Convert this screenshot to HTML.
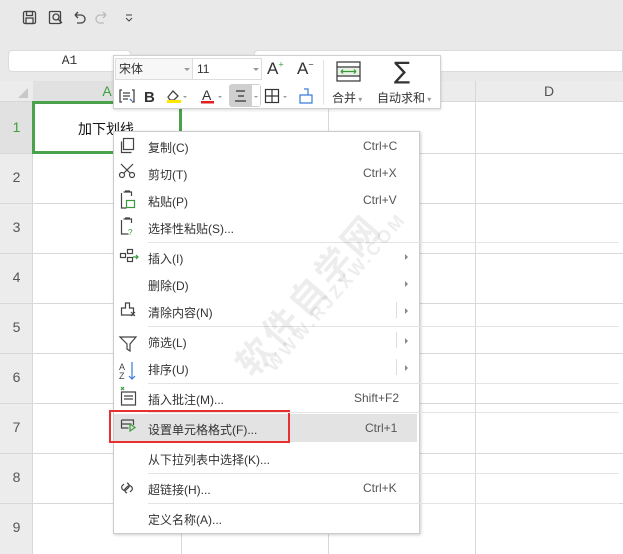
<!DOCTYPE html>
<html><head><meta charset="utf-8"><style>
*{margin:0;padding:0;box-sizing:border-box}
body{width:623px;height:554px;overflow:hidden;background:#fff;font-family:"Liberation Sans","Noto Sans CJK SC",sans-serif;position:relative;font-size:12px;color:#333}
.a{position:absolute}
.vl{position:absolute;top:81px;height:473px;width:1px;background:#d8d8d8}
.hl{position:absolute;left:0;width:623px;height:1px;background:#d8d8d8}
.rn{position:absolute;left:0;width:33px;text-align:center;font-size:14px;color:#555}
.mi{position:absolute;left:148px;font-size:12px;color:#333}
.sep{position:absolute;left:148px;right:4px;height:1px;background:#e4e4e4}
.ar{position:absolute;left:405px;width:0;height:0;border-left:3px solid #888;border-top:3px solid transparent;border-bottom:3px solid transparent}
</style></head><body>
<div class="a" style="left:0;top:0;width:623px;height:81px;background:#e9e9e9"></div>
<svg class="a" style="left:20px;top:8px" width="130" height="20" fill="none" stroke="#444" stroke-width="1.3">
<rect x="3.5" y="3.5" width="12" height="12" rx="1.5"/><rect x="6.5" y="3.5" width="6" height="4"/><rect x="6" y="10" width="7" height="5.5"/>
<rect x="29.5" y="3.5" width="11" height="12" rx="1"/><circle cx="36" cy="9" r="3"/><path d="M38 11l4 4"/>
<path d="M55 7h6a4 4 0 0 1 0 8h-4M55 7l3-3M55 7l3 3"/>
<path stroke="#bbb" d="M86 7h-6a4 4 0 0 0 0 8h4M86 7l-3-3M86 7l-3 3"/>
<path d="M106 7h6M106 10l3 3 3-3" stroke-width="1"/>
</svg>
<div class="a" style="left:8px;top:50px;width:123px;height:22px;background:#fff;border:1px solid #dcdcdc;border-radius:4px;text-align:center;line-height:20px;font-family:'Liberation Mono',monospace;font-size:13px;color:#333">A1</div>
<div class="a" style="left:254px;top:50px;width:369px;height:22px;background:#fff;border:1px solid #dcdcdc;border-radius:4px 0 0 4px"></div>
<div class="a" style="left:0;top:81px;width:623px;height:21px;background:#ececec;border-bottom:1px solid #d8d8d8"></div>
<div class="a" style="left:33px;top:81px;width:148px;height:21px;background:#e1e1e1;color:#3ca03c;text-align:center;font-size:14px;line-height:21px">A</div>
<div class="a" style="left:475px;top:81px;width:148px;height:21px;color:#555;text-align:center;font-size:14px;line-height:21px">D</div>
<div class="a" style="left:18px;top:88px;width:0;height:0;border-left:10px solid transparent;border-bottom:10px solid #c8c8c8"></div>
<div class="a" style="left:0;top:102px;width:33px;height:452px;background:#ececec;border-right:1px solid #d8d8d8"></div>
<div class="a" style="left:0;top:102px;width:33px;height:51px;background:#e1e1e1"></div>
<div class="vl" style="left:181px"></div><div class="vl" style="left:328px"></div><div class="vl" style="left:475px"></div>
<div class="hl" style="top:153px"></div><div class="hl" style="top:203px"></div><div class="hl" style="top:253px"></div><div class="hl" style="top:303px"></div><div class="hl" style="top:353px"></div><div class="hl" style="top:403px"></div><div class="hl" style="top:453px"></div><div class="hl" style="top:503px"></div>
<div class="rn" style="top:119px;color:#3ca03c">1</div>
<div class="rn" style="top:169px">2</div><div class="rn" style="top:219px">3</div><div class="rn" style="top:269px">4</div><div class="rn" style="top:319px">5</div><div class="rn" style="top:369px">6</div><div class="rn" style="top:419px">7</div><div class="rn" style="top:469px">8</div><div class="rn" style="top:519px">9</div>
<div class="a" style="left:32px;top:101px;width:150px;height:53px;border:3px solid #4aa24a"></div>
<div class="a" style="left:78px;top:119px;font-size:14px;color:#111">加下划线</div>
<div class="a" style="left:113px;top:55px;width:328px;height:54px;background:#fff;border:1px solid #d0d0d0;box-shadow:0 1px 3px rgba(0,0,0,.15)"></div>
<div class="a" style="left:115px;top:58px;width:78px;height:22px;border:1px solid #ddd;background:#f7f7f7;font-size:12px;line-height:20px;padding-left:3px">宋体</div>
<div class="a" style="left:193px;top:58px;width:69px;height:22px;border:1px solid #ddd;border-left:none;font-size:12px;line-height:20px;padding-left:4px">11</div>
<div class="a" style="left:184px;top:68px;border-top:3px solid #999;border-left:3px solid transparent;border-right:3px solid transparent"></div>
<div class="a" style="left:253px;top:68px;border-top:3px solid #999;border-left:3px solid transparent;border-right:3px solid transparent"></div>
<div class="a" style="left:267px;top:59px;font-size:17px;color:#333">A<sup style="font-size:9px;color:#3a3">+</sup></div>
<div class="a" style="left:297px;top:59px;font-size:17px;color:#333">A<sup style="font-size:9px">−</sup></div>
<div class="a" style="left:323px;top:60px;width:1px;height:45px;background:#e4e4e4"></div>
<svg class="a" style="left:336px;top:61px" width="26" height="22" fill="none" stroke-width="1.2"><rect x="1" y="1" width="23" height="19" stroke="#333"/><path d="M1 6h23M1 15h23" stroke="#333"/><rect x="2" y="7" width="21" height="7" fill="#e6f2e6" stroke="none"/><path d="M5 10.5h15M5 10.5l2-2M5 10.5l2 2M20 10.5l-2-2M20 10.5l-2 2" stroke="#3a9a3a"/></svg>
<div class="a" style="left:394px;top:57px;font-size:24px;color:#333;font-family:'DejaVu Sans',sans-serif">∑</div>
<svg class="a" style="left:118px;top:86px" width="200" height="20" fill="none" stroke="#444" stroke-width="1.3">
<path d="M4 4h-2v12h2M14 4h2v12h-2M5 7h7M5 10h7M5 13h5" /><path d="M12 13l2 2" stroke="#3b7bd6"/>
<text x="26" y="16" font-family="Liberation Sans" font-weight="bold" font-size="15" fill="#333" stroke="none">B</text>
<path d="M50 11l5-6 5 5-4 4h-4z"/><rect x="49" y="14" width="14" height="3" fill="#ffe500" stroke="none"/><path d="M65 10l2 2 2-2z" fill="#999" stroke="none"/>
<text x="84" y="14" font-family="Liberation Sans" font-size="14" fill="#333" stroke="none">A</text><rect x="83" y="15" width="13" height="2.5" fill="#e02020" stroke="none"/><path d="M100 10l2 2 2-2z" fill="#999" stroke="none"/>
</svg>
<div class="a" style="left:229px;top:84px;width:32px;height:23px;background:#cfcfcf;border-radius:3px"></div>
<div class="a" style="left:252px;top:85px;width:8px;height:21px;background:#fff"></div>
<svg class="a" style="left:229px;top:86px" width="100" height="20" fill="none" stroke="#333" stroke-width="1.2">
<path d="M7 5h9M9 10h6M6 15h11"/><path d="M25 10l2 2 2-2z" fill="#999" stroke="none"/>
<rect x="36.5" y="3.5" width="13" height="13"/><path d="M43 3.5v13M36.5 10h13"/><path d="M54 10l2 2 2-2z" fill="#999" stroke="none"/>
<path d="M75 3h4v6M71 9h12v8h-12z" stroke="#3b7bd6"/>
</svg>
<div class="a" style="left:332px;top:89px;font-size:12px">合并<span style="color:#999;font-size:8px"> ▾</span></div>
<div class="a" style="left:377px;top:89px;font-size:12px">自动求和<span style="color:#999;font-size:8px"> ▾</span></div>
<div class="a" style="left:113px;top:131px;width:307px;height:403px;background:#fff;border:1px solid #ccc;box-shadow:1px 1px 3px rgba(0,0,0,.2)"></div>
<div class="a" style="left:114px;top:414px;width:303px;height:28px;background:#e3e3e3"></div>
<div class="a" style="left:109px;top:410px;width:181px;height:33px;border:2px solid #e83030"></div>
<div class="mi" style="top:139px">复制(C)</div>
<div class="mi" style="top:166px">剪切(T)</div>
<div class="mi" style="top:193px">粘贴(P)</div>
<div class="mi" style="top:220px">选择性粘贴(S)...</div>
<div class="sep" style="top:242px"></div>
<div class="mi" style="top:250px">插入(I)</div>
<div class="mi" style="top:277px">删除(D)</div>
<div class="mi" style="top:304px">清除内容(N)</div>
<div class="sep" style="top:326px"></div>
<div class="mi" style="top:334px">筛选(L)</div>
<div class="mi" style="top:361px">排序(U)</div>
<div class="sep" style="top:383px"></div>
<div class="mi" style="top:391px">插入批注(M)...</div>
<div class="sep" style="top:412px"></div>
<div class="mi" style="top:421px">设置单元格格式(F)...</div>
<div class="mi" style="top:451px">从下拉列表中选择(K)...</div>
<div class="sep" style="top:473px"></div>
<div class="mi" style="top:481px">超链接(H)...</div>
<div class="sep" style="top:503px"></div>
<div class="mi" style="top:511px">定义名称(A)...</div>
<div class="a" style="left:363px;top:139px;color:#555">Ctrl+C</div>
<div class="a" style="left:363px;top:166px;color:#555">Ctrl+X</div>
<div class="a" style="left:363px;top:193px;color:#555">Ctrl+V</div>
<div class="a" style="left:354px;top:391px;color:#555">Shift+F2</div>
<div class="a" style="left:365px;top:421px;color:#555">Ctrl+1</div>
<div class="a" style="left:363px;top:481px;color:#555">Ctrl+K</div>
<div class="ar" style="top:254px"></div><div class="ar" style="top:281px"></div><div class="ar" style="top:308px"></div><div class="ar" style="top:338px"></div><div class="ar" style="top:365px"></div>
<div class="a" style="left:396px;top:302px;width:1px;height:16px;background:#ddd"></div>
<div class="a" style="left:396px;top:332px;width:1px;height:16px;background:#ddd"></div>
<div class="a" style="left:396px;top:359px;width:1px;height:16px;background:#ddd"></div>
<svg class="a" style="left:118px;top:136px" width="26" height="392" fill="none" stroke="#444" stroke-width="1.2">
<rect x="5.5" y="2.5" width="10" height="11"/><path d="M3.5 5.5v11h10"/>
<circle cx="4" cy="39" r="2.5"/><circle cx="14" cy="39" r="2.5"/><path d="M6 37l9-9M12 37l-9-9"/>
<path d="M3.5 57v15h5M5.5 56h8v4M7 55h5"/><rect x="8.5" y="64.5" width="8" height="7" stroke="#3a9a3a"/>
<path d="M3.5 84v14h7M5.5 83h8v4M7 82h5"/><text x="10" y="99" font-size="8" fill="#3a9a3a" stroke="none">?</text>
<rect x="2.5" y="117.5" width="5" height="4"/><rect x="9.5" y="113.5" width="5" height="4"/><rect x="9.5" y="121.5" width="5" height="4"/><path d="M15 121h5M18 119l2 2-2 2" stroke="#3a9a3a"/>
<path d="M3.5 179v-7h4v-5h4v5h4v7zM13 176l4 4M17 176l-4 4"/>
<path d="M2 201h16l-6 7v7l-3-2v-5z"/>
<text x="1" y="234" font-size="9" fill="#444" stroke="none">A</text><text x="1" y="243" font-size="9" fill="#444" stroke="none">Z</text><path d="M14 226v17M11 240l3 3 3-3" stroke="#3b7bd6"/>
<path d="M3.5 256h14v13h-14z"/><path d="M6 260h9M6 263h9"/><path d="M3 251l3 3M6 251l-3 3" stroke="#3a9a3a"/>
<path d="M3.5 284h12v5M3.5 284v8h7M3.5 288h10"/><path d="M12 288v7l5-3.5z" stroke="#3a9a3a"/>
<path d="M6 348l-2 2a3 3 0 0 0 4 4l3-3a3 3 0 0 0-2-4M12 356l2-2a3 3 0 0 0-4-4l-3 3a3 3 0 0 0 2 4"/>
</svg>
<div class="a" style="left:222px;top:352px;transform:rotate(-49deg);transform-origin:left top;font-size:36px;color:rgba(0,0,0,.07);font-weight:bold;white-space:nowrap;letter-spacing:4px">软件自学网</div>
<div class="a" style="left:262px;top:362px;transform:rotate(-49deg);transform-origin:left top;font-size:18px;color:rgba(0,0,0,.07);font-weight:bold;white-space:nowrap;letter-spacing:3px">WWW.RJZXW.COM</div>
</body></html>
